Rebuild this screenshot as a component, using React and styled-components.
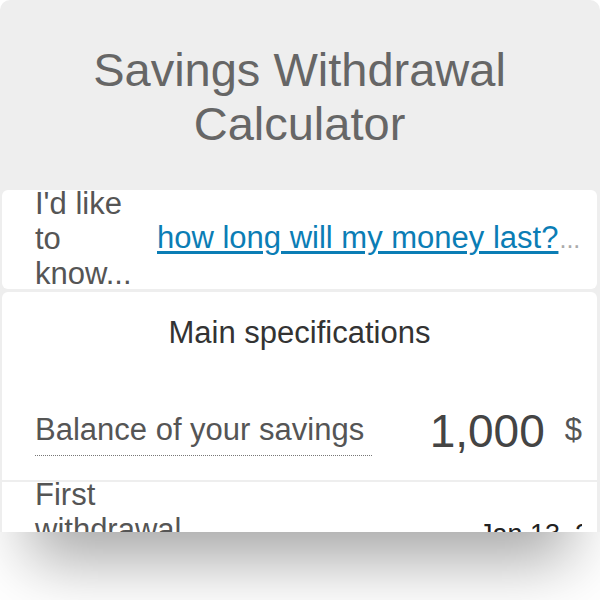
import styled, { createGlobalStyle } from "styled-components";

const GlobalStyle = createGlobalStyle`
	html, body {
		margin: 0;
		padding: 0;
		background: #ffffff;
	}
	body {
		font-family: "Liberation Sans", Arial, sans-serif;
	}
`;

export default function App() {
	return (
		<Page>
			<GlobalStyle />
			<Widget>
				<Header>
					<Title>Savings Withdrawal Calculator</Title>
				</Header>

				<QuestionCard>
					<QuestionLabel>I'd like to know...</QuestionLabel>
					<QuestionSelect>
						<QuestionLink href="#">how long will my money last?</QuestionLink>
						<Ellipsis>...</Ellipsis>
					</QuestionSelect>
				</QuestionCard>

				<SpecsCard>
					<SectionTitle>Main specifications</SectionTitle>

					<BalanceRow>
						<FieldLabel $dotted $offset="61px">
							Balance of your savings
						</FieldLabel>
						<ValueBox>
							<BigValue>1,000</BigValue>
							<Unit>$</Unit>
						</ValueBox>
					</BalanceRow>

					<DateRow>
						<FieldLabel $width="160px" $offset="-5px">
							First withdrawal date
						</FieldLabel>
						<DateValue>Jan 13, 2026</DateValue>
					</DateRow>
				</SpecsCard>
			</Widget>
		</Page>
	);
}

const Page = styled.div`
	width: 600px;
	height: 600px;
	background: #ffffff;
`;

const Widget = styled.div`
	width: 600px;
	height: 532px;
	overflow: hidden;
	background: #eeeeee;
	border-radius: 10px 10px 0 0;
	box-shadow: 0 58px 60px -30px rgba(0, 0, 0, 0.35);
	display: flex;
	flex-direction: column;
	padding: 0 3px 0 2px;
	box-sizing: border-box;
`;

const Header = styled.div`
	height: 190px;
	flex-shrink: 0;
	display: flex;
	align-items: center;
	justify-content: center;
	padding: 4px 90px 0;
	box-sizing: border-box;
`;

const Title = styled.h1`
	margin: 0;
	font-size: 47px;
	line-height: 54px;
	font-weight: 400;
	color: #666666;
	text-align: center;
`;

const QuestionCard = styled.div`
	height: 99px;
	flex-shrink: 0;
	background: #ffffff;
	border-radius: 6px;
	display: flex;
	align-items: center;
	padding: 0 20px 0 33px;
	box-sizing: border-box;
	margin-bottom: 3px;
`;

const QuestionLabel = styled.div`
	width: 105px;
	flex-shrink: 0;
	font-size: 31px;
	line-height: 35px;
	color: #555555;
	margin-top: -3px;
`;

const QuestionSelect = styled.div`
	display: flex;
	align-items: baseline;
	margin-left: 17px;
	margin-top: -3px;
	white-space: nowrap;
`;

const QuestionLink = styled.a`
	font-size: 31px;
	color: #0b7db5;
	text-decoration: underline;
	text-underline-offset: 3px;
`;

const Ellipsis = styled.span`
	font-size: 25px;
	color: #aaaaaa;
	margin-left: 1px;
`;

const SpecsCard = styled.div`
	flex: 1;
	background: #ffffff;
	border-radius: 6px 6px 0 0;
	display: flex;
	flex-direction: column;
`;

const SectionTitle = styled.div`
	font-size: 31px;
	line-height: 36px;
	color: #333333;
	text-align: center;
	padding: 23px 0 0;
`;

const BalanceRow = styled.div`
	display: flex;
	align-items: flex-start;
	justify-content: space-between;
	height: 129px;
	flex-shrink: 0;
	padding: 0 15px 0 33px;
	box-sizing: border-box;
`;

const DateRow = styled.div`
	display: flex;
	align-items: flex-start;
	justify-content: space-between;
	border-top: 2px solid #eeeeee;
	padding: 0 15px 0 33px;
`;

const FieldLabel = styled.div`
	font-size: 31px;
	line-height: 35px;
	color: #555555;
	width: ${(p) => p.$width || "auto"};
	margin-top: ${(p) => p.$offset || "0"};
	padding: ${(p) => (p.$dotted ? "0 8px 8px 0" : "0")};
	border-bottom: ${(p) => (p.$dotted ? "1px dotted #777777" : "none")};
`;

const ValueBox = styled.div`
	display: flex;
	align-items: flex-start;
	gap: 20px;
	margin-top: 57px;
`;

const BigValue = styled.span`
	font-size: 46px;
	line-height: 46px;
	color: #444444;
`;

const Unit = styled.span`
	font-size: 31px;
	line-height: 35px;
	margin-top: 4px;
	color: #555555;
`;

const DateValue = styled.div`
	width: 103px;
	overflow: hidden;
	white-space: nowrap;
	font-size: 27px;
	color: #222222;
	margin-top: 37px;
`;
